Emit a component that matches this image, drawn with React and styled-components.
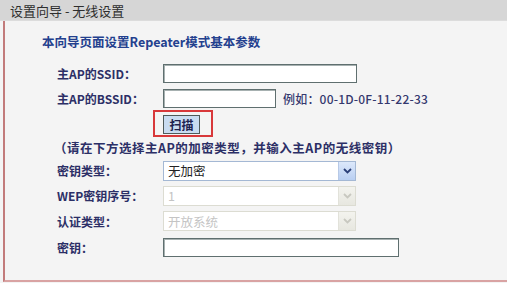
import React from "react";
import styled, { createGlobalStyle } from "styled-components";

const GlobalStyle = createGlobalStyle`
  html, body {
    margin: 0;
    padding: 0;
    background: #f4f4f4;
    overflow: hidden;
  }
  body {
    font-family: "Noto Sans CJK SC", "Liberation Sans", sans-serif;
  }
`;

const Page = styled.div`
  width: 507px;
  height: 283px;
  background: #f4f4f4;
`;

const Header = styled.div`
  height: 21px;
  background: #d6d6d6;
  border-bottom: 1px solid #dcdcdc;
  box-sizing: border-box;
  padding-left: 10px;
  display: flex;
  align-items: center;
  font-size: 13px;
  color: #2e2e2e;
  white-space: pre;
`;

const Panel = styled.div`
  margin-left: 3px;
  height: 261px;
  box-sizing: border-box;
  border-left: 2px solid #c27b7b;
  border-bottom: 2px solid #d9a3a3;
  padding-top: 13px;
`;

const Title = styled.div`
  padding-left: 37px;
  height: 16px;
  line-height: 16px;
  font-size: 12.5px;
  font-weight: 700;
  color: #23408e;
`;

const Form = styled.div`
  margin-top: 10px;
  display: grid;
  grid-template-columns: 106px 1fr;
  padding-left: 52px;
`;

const Label = styled.div`
  height: ${(p) => p.h}px;
  display: flex;
  align-items: center;
  font-size: 12px;
  font-weight: 700;
  color: #2c2f66;
`;

const Field = styled.div`
  height: ${(p) => p.h}px;
  display: flex;
  align-items: center;
  gap: 7px;
`;

const Note = styled.div`
  grid-column: 1 / span 2;
  height: 21px;
  display: flex;
  align-items: center;
  font-size: 12.5px;
  font-weight: 700;
  color: #2c2f66;
  letter-spacing: 0.5px;
  margin-left: -3px;
`;

const TextBox = styled.div`
  width: ${(p) => p.w}px;
  height: 19px;
  box-sizing: border-box;
  background: #fff;
  border: 1px solid #5f6f6f;
  box-shadow: inset 1px 1px 0 #a7b1b1;
`;

const Hint = styled.span`
  font-size: 12px;
  font-weight: 500;
  color: #34386e;
  letter-spacing: 0.2px;
`;

const Highlight = styled.div`
  margin-left: -10px;
  width: 60px;
  height: 27px;
  box-sizing: border-box;
  border: 2px solid #d8383a;
  padding: 3px 0 0 8px;
`;

const Button = styled.div`
  width: 37px;
  height: 19px;
  box-sizing: border-box;
  border: 1px solid #4f5a5a;
  background: #c9dcf1;
  display: flex;
  align-items: center;
  justify-content: center;
  font-size: 12px;
  font-weight: 700;
  color: #1e2350;
`;

const Select = styled.div`
  width: 193px;
  height: 20px;
  box-sizing: border-box;
  background: #fff;
  border: 1px solid ${(p) => (p.disabled ? "#dcdcd2" : "#a4b8d4")};
  display: flex;
  align-items: center;
`;

const SelectText = styled.span`
  flex: 1;
  padding-left: 4px;
  font-size: 12.5px;
  color: ${(p) => (p.disabled ? "#c4c4c4" : "#222")};
`;

const Arrow = styled.div`
  width: 17px;
  height: 18px;
  box-sizing: border-box;
  display: flex;
  align-items: center;
  justify-content: center;
  background: ${(p) =>
    p.disabled
      ? "linear-gradient(#f3f3ee, #e7e7e0)"
      : "linear-gradient(#dce8fb, #b9cff2)"};
  border-left: 1px solid ${(p) => (p.disabled ? "#e2e2da" : "#b7c9e6")};
`;

const Chevron = ({ disabled }) => (
  <svg width="9" height="6" viewBox="0 0 9 6">
    <path
      d="M1 1 L4.5 4.5 L8 1"
      fill="none"
      stroke={disabled ? "#c8c8c0" : "#2b3f78"}
      strokeWidth="1.8"
    />
  </svg>
);

const Dropdown = ({ value, disabled }) => (
  <Select disabled={disabled}>
    <SelectText disabled={disabled}>{value}</SelectText>
    <Arrow disabled={disabled}>
      <Chevron disabled={disabled} />
    </Arrow>
  </Select>
);

export default function App() {
  return (
    <Page>
      <GlobalStyle />
      <Header>设置向导 - 无线设置</Header>
      <Panel>
        <Title>本向导页面设置Repeater模式基本参数</Title>
        <Form>
          <Label h={26}>主AP的SSID：</Label>
          <Field h={26}>
            <TextBox w={194} />
          </Field>

          <Label h={24}>主AP的BSSID：</Label>
          <Field h={24}>
            <TextBox w={113} />
            <Hint>例如：00-1D-0F-11-22-33</Hint>
          </Field>

          <Label h={27} />
          <Field h={27}>
            <Highlight>
              <Button>扫描</Button>
            </Highlight>
          </Field>

          <Note>（请在下方选择主AP的加密类型，并输入主AP的无线密钥）</Note>

          <Label h={25}>密钥类型：</Label>
          <Field h={25}>
            <Dropdown value="无加密" />
          </Field>

          <Label h={25}>WEP密钥序号：</Label>
          <Field h={25}>
            <Dropdown value="1" disabled />
          </Field>

          <Label h={26}>认证类型：</Label>
          <Field h={26}>
            <Dropdown value="开放系统" disabled />
          </Field>

          <Label h={26}>密钥：</Label>
          <Field h={26}>
            <TextBox w={236} />
          </Field>
        </Form>
      </Panel>
    </Page>
  );
}
